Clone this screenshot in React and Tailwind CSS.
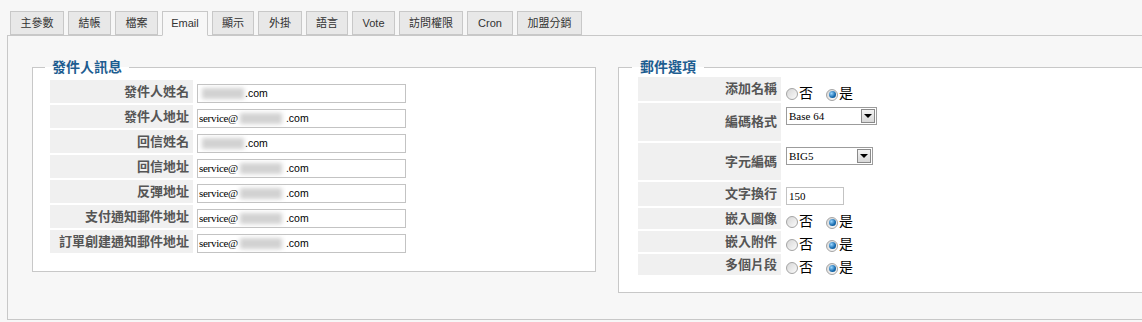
const tabs = [
  { label: '主參數', w: 'w-[54px]' },
  { label: '結帳', w: 'w-[43px]' },
  { label: '檔案', w: 'w-[43px]' },
  { label: 'Email', w: 'w-[46px]', active: true },
  { label: '顯示', w: 'w-[42px]' },
  { label: '外掛', w: 'w-[44px]' },
  { label: '語言', w: 'w-[42px]' },
  { label: 'Vote', w: 'w-[43px]' },
  { label: '訪問權限', w: 'w-[64px]' },
  { label: 'Cron', w: 'w-[46px]' },
  { label: '加盟分銷', w: 'w-[65px]' },
];

const senderRows = [
  { label: '發件人姓名', service: false },
  { label: '發件人地址', service: true },
  { label: '回信姓名', service: false },
  { label: '回信地址', service: true },
  { label: '反彈地址', service: true },
  { label: '支付通知郵件地址', service: true },
  { label: '訂單創建通知郵件地址', service: true },
];

function Blur() {
  return <span className="inline-block w-[42px] h-[11px] bg-[#d2d2d2] blur-[2px]" />;
}

function EmailInput({ service }) {
  return (
    <div className="w-[209px] h-[19px] border border-[#c3c3c3] bg-white flex items-center pl-[1px] text-black">
      {service ? (
        <>
          <span className="text-[11px] font-['Liberation_Serif',serif] tracking-[-0.3px]">service@</span>
          <span className="ml-[2px]"><Blur /></span>
          <span className="ml-[4px] text-[10.5px]">.com</span>
        </>
      ) : (
        <>
          <span className="ml-[3px]"><Blur /></span>
          <span className="ml-[1px] text-[10.5px]">.com</span>
        </>
      )}
    </div>
  );
}

function Radio({ checked }) {
  return (
    <span className="inline-flex w-[12px] h-[12px] rounded-full border border-[#a4a4a4] bg-linear-to-br from-[#d6d6d6] to-[#fbfbfb] items-center justify-center">
      {checked && <span className="w-[7px] h-[7px] rounded-full bg-[radial-gradient(circle_at_35%_35%,#9ad6ff,#1469ad_60%,#0b4a80)]" />}
    </span>
  );
}

function YesNo() {
  return (
    <div className="flex items-center text-[14px] text-black leading-[15px]">
      <Radio />
      <span className="ml-[1px]">否</span>
      <span className="ml-[13px]"><Radio checked /></span>
      <span className="ml-[1px]">是</span>
    </div>
  );
}

function Select({ value, w }) {
  return (
    <div className={`${w} h-[18px] border border-[#9c9c9c] bg-white flex items-center justify-between`}>
      <span className="pl-[2px] text-[11px] font-['Liberation_Serif',serif] text-black">{value}</span>
      <span className="w-[14px] h-[14px] mr-[1px] border border-[#8a8a8a] bg-linear-to-b from-[#f4f4f4] to-[#d8d8d8] flex items-center justify-center">
        <span className="w-0 h-0 border-l-[4px] border-r-[4px] border-t-[4px] border-l-transparent border-r-transparent border-t-black" />
      </span>
    </div>
  );
}

function Label({ children }) {
  return (
    <div className="w-[143px] h-full bg-[#f0f0f0] flex items-center justify-end pr-[4px] font-bold text-[13px] text-[#555]">
      {children}
    </div>
  );
}

export default function App() {
  const options = [
    { label: '添加名稱', h: 'h-[24px]', align: 'items-end', content: <YesNo /> },
    { label: '編碼格式', h: 'h-[38px]', align: 'items-start pt-[4px]', content: <Select value="Base 64" w="w-[91px]" /> },
    { label: '字元編碼', h: 'h-[37px]', align: 'items-start pt-[4px]', content: <Select value="BIG5" w="w-[87px]" /> },
    {
      label: '文字換行', h: 'h-[24px]', align: 'items-start pt-[5px]',
      content: (
        <div className="w-[58px] h-[18px] border border-[#c3c3c3] bg-white flex items-center pl-[2px] text-[11px] font-['Liberation_Serif',serif] text-black">150</div>
      ),
    },
    { label: '嵌入圖像', h: 'h-[21px]', align: 'items-end', content: <YesNo /> },
    { label: '嵌入附件', h: 'h-[21px]', align: 'items-end', content: <YesNo /> },
    { label: '多個片段', h: 'h-[21px]', align: 'items-end', content: <YesNo /> },
  ];

  return (
    <div className="w-[1142px] h-[322px] overflow-hidden bg-[#f7f7f7] font-['Liberation_Sans','Noto_Sans_CJK_TC',sans-serif] text-[#333]">
      {/* TABS */}
      <div className="flex gap-[4px] pl-[10px] pt-[11px] h-[36px]">
        {tabs.map((t) => (
          <div
            key={t.label}
            className={`${t.w} flex items-center justify-center border border-[#c8c8c8] text-[11px] ${
              t.active ? 'h-[25px] bg-[#f7f7f7] border-b-[#f7f7f7] relative z-10' : 'h-[24px] bg-[#e8e8e8]'
            }`}
          >
            {t.label}
          </div>
        ))}
      </div>

      {/* PANEL */}
      <div className="ml-[7px] -mt-[1px] w-[1200px] h-[285px] border border-[#c8c8c8] bg-[#f7f7f7] flex items-start gap-[22px] pl-[24px] pt-[22px]">
        <fieldset className="w-[564px] border border-[#c8c8c8] bg-white">
          <legend className="ml-[12px] px-[7px] text-[14px] font-bold text-[#1d5d90] leading-[18px]">發件人訊息</legend>
          <div className="flex flex-col gap-[2px] pt-[4px] pl-[17px] pb-[18px]">
            {senderRows.map((r) => (
              <div key={r.label} className="flex items-end gap-[4px] h-[23px]">
                <Label>{r.label}</Label>
                <EmailInput service={r.service} />
              </div>
            ))}
          </div>
        </fieldset>

        <fieldset className="w-[564px] border border-[#c8c8c8] bg-white">
          <legend className="ml-[13px] px-[8px] text-[14px] font-bold text-[#1d5d90] leading-[18px]">郵件選項</legend>
          <div className="flex flex-col gap-[2px] pt-[1px] pl-[19px] pb-[17px]">
            {options.map((o) => (
              <div key={o.label} className={`flex ${o.h}`}>
                <Label>{o.label}</Label>
                <div className={`flex ml-[5px] ${o.align}`}>{o.content}</div>
              </div>
            ))}
          </div>
        </fieldset>
      </div>
    </div>
  );
}
